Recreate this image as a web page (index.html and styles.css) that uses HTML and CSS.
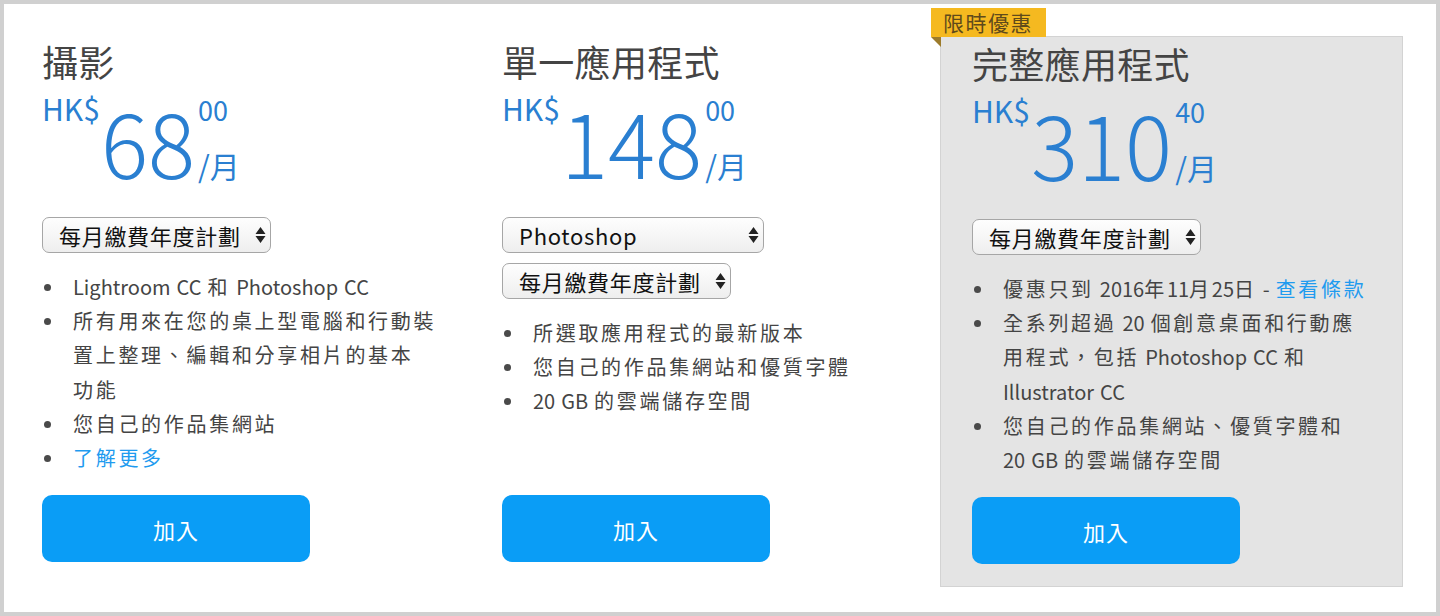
FILE: index.html
```html
<!DOCTYPE html>
<html lang="zh-Hant">
<head>
<meta charset="utf-8">
<title>方案</title>
<link rel="stylesheet" href="styles.css">
</head>
<body>
<div class="frame">
  <div class="plans">
    <section class="plan plan-photo">
      <h2 class="title">攝影</h2>
      <div class="price">
        <span class="cur">HK$</span>
        <span class="amount">68</span>
        <span class="tail"><span class="cents">00</span><span class="per">/月</span></span>
      </div>
      <div class="selects">
        <div class="select w-plan"><span>每月繳費年度計劃</span><svg class="arrows" width="11" height="16" viewBox="0 0 11 16"><path d="M5.5 0 L10.5 7 H0.5 Z M5.5 16 L10.5 9 H0.5 Z" fill="#222"/></svg></div>
      </div>
      <ul class="features">
        <li><span class="en">Lightroom CC </span>和<span class="en"> Photoshop CC</span></li>
        <li>所有用來在您的桌上型電腦和行動裝置上整理、編輯和分享相片的基本<span class="nw">功能</span></li>
        <li>您自己的作品集網站</li>
        <li><a class="link" href="#">了解更多</a></li>
      </ul>
      <a class="join" href="#">加入</a>
    </section>

    <section class="plan plan-single">
      <h2 class="title">單一應用程式</h2>
      <div class="price">
        <span class="cur">HK$</span>
        <span class="amount">148</span>
        <span class="tail"><span class="cents">00</span><span class="per">/月</span></span>
      </div>
      <div class="selects">
        <div class="select w-app"><span>Photoshop</span><svg class="arrows" width="11" height="16" viewBox="0 0 11 16"><path d="M5.5 0 L10.5 7 H0.5 Z M5.5 16 L10.5 9 H0.5 Z" fill="#222"/></svg></div>
        <div class="select w-plan"><span>每月繳費年度計劃</span><svg class="arrows" width="11" height="16" viewBox="0 0 11 16"><path d="M5.5 0 L10.5 7 H0.5 Z M5.5 16 L10.5 9 H0.5 Z" fill="#222"/></svg></div>
      </div>
      <ul class="features">
        <li>所選取應用程式的最新版本</li>
        <li>您自己的作品集網站和優質字體</li>
        <li><span class="en">20&nbsp;GB </span>的雲端儲存空間</li>
      </ul>
      <a class="join" href="#">加入</a>
    </section>

    <section class="plan plan-all">
      <div class="badge">限時優惠</div>
      <h2 class="title">完整應用程式</h2>
      <div class="price">
        <span class="cur">HK$</span>
        <span class="amount">310</span>
        <span class="tail"><span class="cents">40</span><span class="per">/月</span></span>
      </div>
      <div class="selects">
        <div class="select w-plan"><span>每月繳費年度計劃</span><svg class="arrows" width="11" height="16" viewBox="0 0 11 16"><path d="M5.5 0 L10.5 7 H0.5 Z M5.5 16 L10.5 9 H0.5 Z" fill="#222"/></svg></div>
      </div>
      <ul class="features">
        <li>優惠只到<span class="en"> 2016</span>年<span class="en">11</span>月<span class="en">25</span>日<span class="en"> - </span><a class="link" href="#">查看條款</a></li>
        <li>全系列超過<span class="en"> 20 </span>個創意桌面和行動應用程式，包括<span class="en"> Photoshop CC </span>和<span class="en"> Illustrator CC</span></li>
        <li>您自己的作品集網站、優質字體和<span class="en"> 20&nbsp;GB </span>的雲端儲存空間</li>
      </ul>
      <a class="join" href="#">加入</a>
    </section>
  </div>
</div>
</body>
</html>
```

FILE: styles.css
```css
html, body {
  margin: 0;
  padding: 0;
  background: #fff;
}

body {
  font-family: "Noto Sans CJK TC", "Noto Sans", sans-serif;
  color: #444;
}

.frame {
  width: 1440px;
  height: 616px;
  box-sizing: border-box;
  border: 4px solid #d0d0d0;
  background: #fff;
  padding: 32px 33px 0 38px;
}

.plans {
  display: flex;
  align-items: stretch;
}

.plan {
  display: flex;
  flex-direction: column;
  box-sizing: border-box;
  padding: 5px 0 25px;
}

.plan-photo { width: 460px; }
.plan-single { width: 438px; }

.plan-all {
  flex: 1;
  position: relative;
  background: #e4e4e4;
  border: 1px solid #d3d3d3;
  padding: 6px 31px 22px;
}

.badge {
  position: absolute;
  top: -29px;
  left: -10px;
  width: 115px;
  height: 29px;
  box-sizing: border-box;
  padding-left: 12px;
  background: #f5b920;
  color: #5f4a1b;
  font-size: 21px;
  line-height: 29px;
  letter-spacing: 1.5px;
}

.badge::after {
  content: "";
  position: absolute;
  left: 0;
  top: 100%;
  width: 0;
  height: 0;
  border-top: 10px solid #9c7b2b;
  border-left: 10px solid transparent;
}

.title {
  margin: 0;
  font-size: 36px;
  line-height: 40px;
  font-weight: 400;
  letter-spacing: 0.3px;
  color: #444;
}

.price {
  display: flex;
  align-items: flex-start;
  margin-top: 7px;
  height: 97px;
  color: #2a7fd1;
}

.cur {
  font-size: 30px;
  line-height: 30px;
  margin-top: 5px;
}

.amount {
  font-size: 88px;
  line-height: 88px;
  font-weight: 300;
  margin-top: 9px;
  margin-left: 1px;
  letter-spacing: 0;
}

.tail {
  display: flex;
  flex-direction: column;
  margin-left: 3px;
}

.cents {
  font-size: 27px;
  line-height: 27px;
  margin-top: 8px;
}

.per {
  font-size: 30px;
  line-height: 30px;
  margin-top: 27px;
}

.selects {
  margin-top: 32px;
  display: flex;
  flex-direction: column;
  align-items: flex-start;
  gap: 10px;
}

.select {
  height: 36px;
  box-sizing: border-box;
  border: 1px solid #a6a6a6;
  border-radius: 7px;
  background: linear-gradient(#fefefe, #eeeeee);
  display: flex;
  align-items: center;
  justify-content: space-between;
  padding: 0 4px 0 16px;
  font-size: 22px;
  letter-spacing: 0.7px;
  color: #111;
}

.w-plan { width: 229px; }
.w-app { width: 262px; }

.arrows {
  flex: none;
}

.features {
  list-style: none;
  margin: 17px 0 20px;
  padding: 0;
  max-width: 399px;
  flex: 1;
  font-size: 20px;
  letter-spacing: 2.7px;
  line-height: 34.2px;
  color: #444;
}

.features li {
  position: relative;
  padding-left: 31px;
}

.features li::before {
  content: "";
  position: absolute;
  left: 2px;
  top: 14px;
  width: 7px;
  height: 7px;
  border-radius: 50%;
  background: #4a4a4a;
}

.en {
  letter-spacing: 0;
  word-spacing: 1.5px;
}

.nw {
  white-space: nowrap;
}

.link {
  color: #1f9bef;
  text-decoration: none;
}

.join {
  flex: none;
  width: 268px;
  height: 67px;
  border-radius: 10px;
  background: #0a9df6;
  color: #fff;
  display: flex;
  align-items: center;
  justify-content: center;
  font-size: 22px;
  letter-spacing: 1px;
  text-decoration: none;
}
```
